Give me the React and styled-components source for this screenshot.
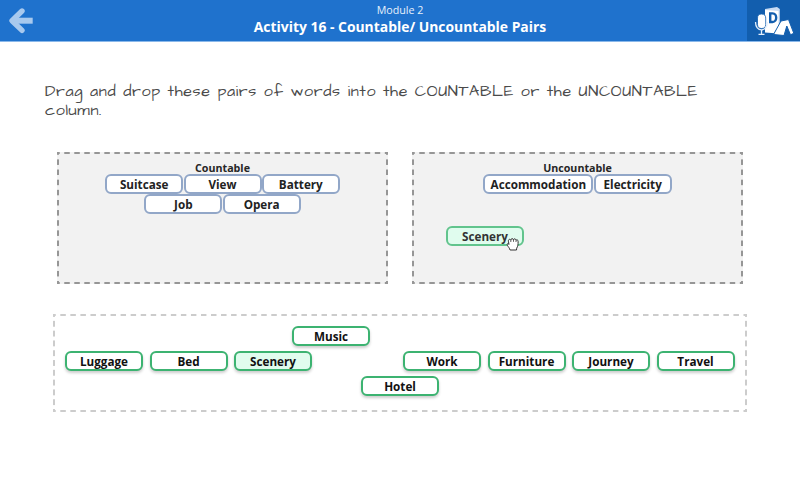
import React from "react";
import styled, { createGlobalStyle, css } from "styled-components";

const GlobalStyle = createGlobalStyle`
  * { box-sizing: border-box; }
  body { margin: 0; background: #fff; font-family: "Open Sans", "Noto Sans", sans-serif; }
`;

const dashedFrame = css`
  --dash: ${(p) => p.$dash} 0 28%, transparent 28% 72%, ${(p) => p.$dash} 72% 100%;
  background-image:
    linear-gradient(90deg, var(--dash)),
    linear-gradient(90deg, var(--dash)),
    linear-gradient(180deg, var(--dash)),
    linear-gradient(180deg, var(--dash));
  background-size: 10px 1.7px, 10px 1.7px, 1.7px 10px, 1.7px 10px;
  background-position: 0 0, 0 100%, 0 0, 100% 0;
  background-repeat: round no-repeat, round no-repeat, no-repeat round, no-repeat round;
`;

const Page = styled.div`
  width: 800px;
  height: 480px;
  overflow: hidden;
  background: #fff;
`;

const Header = styled.header`
  height: 42px;
  display: grid;
  grid-template-columns: 53px 1fr 53px;
  background: #1f72cd;
  border-bottom: 1px solid #8ab8ea;
`;

const BackButton = styled.button`
  border: 0;
  padding: 0;
  background: none;
  display: flex;
`;

const ResourcesButton = styled.button`
  border: 0;
  padding: 0;
  background: #125eae;
  display: flex;
`;

const Titles = styled.div`
  display: flex;
  flex-direction: column;
  align-items: center;
  color: #fff;
  white-space: nowrap;
`;

const ModuleName = styled.div`
  font-size: 10.7px;
  line-height: 14px;
  padding-top: 3px;
  color: #e6f0fb;
`;

const ActivityName = styled.h1`
  margin: 0;
  font-size: 13.9px;
  line-height: 20px;
  font-weight: 700;
`;

const Instruction = styled.p`
  margin: 40px 85px 0 45px;
  height: 38px;
  font-family: "Architects Daughter", cursive;
  font-size: 16px;
  line-height: 19px;
  letter-spacing: 0.65px;
  word-spacing: -0.2px;
  color: #4a4a4a;
`;

const Columns = styled.section`
  display: flex;
  gap: 24px;
  margin: 32px 57px 0;
`;

const DropZone = styled.div`
  position: relative;
  flex: 1;
  height: 132px;
  padding-top: 9px;
  background-color: #f2f2f2;
  ${dashedFrame}
`;

const ZoneTitle = styled.div`
  height: 13.2px;
  line-height: 14px;
  font-size: 10.7px;
  font-weight: 700;
  color: #262626;
  text-align: center;
`;

const PlacedRow = styled.div`
  display: flex;
  justify-content: center;
  gap: 0.3px;
  height: 20px;
`;

const Chip = styled.div`
  flex: none;
  min-width: 78px;
  height: 20px;
  padding: 0 5.3px;
  border: 2px solid #3cb371;
  border-radius: 6px;
  background: ${(p) => (p.$active ? "#e0fcee" : "#fff")};
  box-shadow: 0 2px 3px rgba(0, 0, 0, 0.2);
  font-size: 11.7px;
  line-height: 16px;
  font-weight: 700;
  color: #111;
  text-align: center;
  white-space: nowrap;
`;

const PlacedChip = styled(Chip)`
  border-color: #92a7c8;
  box-shadow: none;
  color: #222;
`;

const DraggedChip = styled(Chip)`
  position: absolute;
  left: 34px;
  top: 74px;
  box-shadow: none;
  border-color: #62c48d;
  color: #333;
`;

const HandCursor = styled.svg`
  position: absolute;
  left: 57px;
  top: 8px;
`;

const Bank = styled.section`
  height: 98px;
  margin: 30px 53px 0;
  padding: 12px 12px 0;
  display: flex;
  flex-direction: column;
  gap: 5px;
  ${dashedFrame}
`;

const BankRow = styled.div`
  display: grid;
  grid-template-columns: repeat(8, 78px);
  column-gap: 6.5px;
  height: 20px;
  padding-left: ${(p) => p.$indent || 0}px;
`;

const bankWords = ["Luggage", "Bed", "Scenery", null, "Work", "Furniture", "Journey", "Travel"];

const ArrowIcon = () => (
  <svg width="53" height="41" viewBox="0 0 53 41" fill="none" stroke="#a8c9ee" strokeLinecap="round" strokeLinejoin="round">
    <path d="M22 11 L12 20.7 L22 30.4" strokeWidth="5.4" />
    <path d="M13 20.7 H32.7" strokeWidth="6" strokeLinecap="butt" />
  </svg>
);

const ResourcesIcon = () => (
  <svg width="53" height="41" viewBox="0 0 53 41">
    <path d="M18 9 L30 7 L32.8 9 V31 H18 Z" fill="#c9dcf3" />
    <path d="M18 10 L31.5 11 V33.5 L18 32.5 Z" fill="#fff" />
    <path d="M23.2 13.4 H25.6 C30.4 13.4 30.4 22 25.6 22 H23.2 Z" fill="none" stroke="#125eae" strokeWidth="2.4" />
    <path d="M34 21 L41.5 19.5 L46.8 33.3 L43.5 34.8 L39.8 26 L37 35.5 L26.5 34.5 Z" fill="#fff" stroke="#125eae" strokeWidth="1" />
    <rect x="10.5" y="14" width="8.2" height="14.5" rx="4.1" fill="#fff" stroke="#125eae" strokeWidth=".8" />
    <path d="M8.6 22 C8 32.5 20.8 32.5 20.3 22 M14.5 30 V34 M11.5 34.3 H17.5" fill="none" stroke="#e5effb" strokeWidth="1.3" />
  </svg>
);

const GrabIcon = () => (
  <HandCursor width="16" height="16" viewBox="0 0 16 16">
    <path
      d="M4.6 12.8 C3.6 10.7 2.2 9.8 2.2 8.4 C2.2 7.5 3.2 7.2 3.9 7.8 L3.4 5.2 C3.1 3.2 5.2 2.7 5.8 4.2 C5.8 2.3 8.2 2.1 8.5 3.8 C8.8 2.3 10.8 2.5 11 4.3 C11.8 3.4 13.1 3.8 13.1 5.3 C13.2 8.7 12.9 10 11.7 12.2 L11.5 14 H5.1 Z"
      fill="#fff" stroke="#333" strokeWidth="1" strokeLinejoin="round"
    />
    <path d="M5.8 4.2 V6 M8.5 3.8 V5.8 M11 4.3 V6 M3.9 7.8 V9" stroke="#333" strokeWidth=".8" />
  </HandCursor>
);

const Zone = ({ title, rows, children }) => (
  <DropZone $dash="#969696">
    <ZoneTitle>{title}</ZoneTitle>
    {rows.map((row) => (
      <PlacedRow key={row[0]}>
        {row.map((word) => <PlacedChip key={word}>{word}</PlacedChip>)}
      </PlacedRow>
    ))}
    {children}
  </DropZone>
);

export default function App() {
  return (
    <Page>
      <GlobalStyle />
      <Header>
        <BackButton aria-label="Back"><ArrowIcon /></BackButton>
        <Titles>
          <ModuleName>Module 2</ModuleName>
          <ActivityName>Activity 16 - Countable/ Uncountable Pairs</ActivityName>
        </Titles>
        <ResourcesButton aria-label="Resources"><ResourcesIcon /></ResourcesButton>
      </Header>
      <Instruction>
        Drag and drop these pairs of words into the COUNTABLE or the UNCOUNTABLE column.
      </Instruction>
      <Columns>
        <Zone title="Countable" rows={[["Suitcase", "View", "Battery"], ["Job", "Opera"]]} />
        <Zone title="Uncountable" rows={[["Accommodation", "Electricity"]]}>
          <DraggedChip $active>Scenery<GrabIcon /></DraggedChip>
        </Zone>
      </Columns>
      <Bank $dash="#ccc">
        <BankRow $indent={227}><Chip>Music</Chip></BankRow>
        <BankRow>
          {bankWords.map((word, i) => word ? <Chip key={word} $active={word === "Scenery"}>{word}</Chip> : <span key={i} />)}
        </BankRow>
        <BankRow $indent={296}><Chip>Hotel</Chip></BankRow>
      </Bank>
    </Page>
  );
}
